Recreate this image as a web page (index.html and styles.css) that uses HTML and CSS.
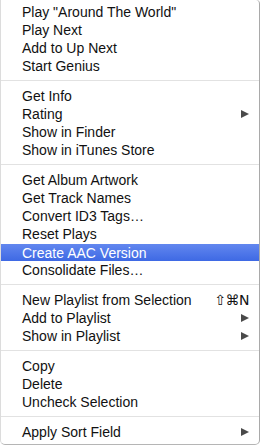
FILE: index.html
```html
<!DOCTYPE html>
<html lang="en">
<head>
  <meta charset="UTF-8" />
  <title>Context Menu</title>
  <link rel="stylesheet" href="styles.css">
</head>
<body>
  <!-- track context menu -->
  <div class="menu">
    <div class="item">Play "Around The World"</div>
    <div class="item">Play Next</div>
    <div class="item">Add to Up Next</div>
    <div class="item">Start Genius</div>
    <div class="sep"></div>
    <div class="item">Get Info</div>
    <div class="item sub">Rating</div>
    <div class="item">Show in Finder</div>
    <div class="item">Show in iTunes Store</div>
    <div class="sep"></div>
    <div class="item">Get Album Artwork</div>
    <div class="item">Get Track Names</div>
    <div class="item">Convert ID3 Tags…</div>
    <div class="item">Reset Plays</div>
    <div class="item active">Create AAC Version</div>
    <div class="item">Consolidate Files…</div>
    <div class="sep"></div>
    <div class="item">New Playlist from Selection <span class="key">⇧⌘N</span></div>
    <div class="item sub">Add to Playlist</div>
    <div class="item sub">Show in Playlist</div>
    <div class="sep"></div>
    <div class="item">Copy</div>
    <div class="item">Delete</div>
    <div class="item">Uncheck Selection</div>
    <div class="sep"></div>
    <div class="item sub">Apply Sort Field</div>
  </div>
</body>
</html>
```

FILE: styles.css
```css
body {
  margin: 0;
  background: #fff;
  font-family: 'Liberation Sans', Arial, sans-serif;
}

.menu {
  width: 258px;
  height: 441px;
  padding-top: 3px;
  background: #fff;
  border-left: 1px solid #dcdcdc;
  border-right: 1px solid #a9a9a9;
  border-bottom: 1px solid #b5b5b5;
  border-radius: 0 4px 5px 5px;
  display: flex;
  flex-direction: column;
}

.item {
  height: 18px;
  padding: 0 10px 0 21px;
  display: flex;
  align-items: center;
  justify-content: space-between;
  font-size: 14px;
  color: #111;
}

.item.active {
  height: 17px;
  margin-top: 1px;
  background: linear-gradient(#6287ef, #3e69e4);
  color: #fff;
}

.item.sub::after {
  content: "";
  width: 0;
  height: 0;
  border-top: 4px solid transparent;
  border-bottom: 4px solid transparent;
  border-left: 8px solid #4a4a4a;
}

.key {
  font-family: 'DejaVu Sans', sans-serif;
  font-size: 14px;
  letter-spacing: -0.5px;
}

.sep {
  height: 1px;
  margin: 5px 0 6px;
  background: #e2e2e2;
}
```
